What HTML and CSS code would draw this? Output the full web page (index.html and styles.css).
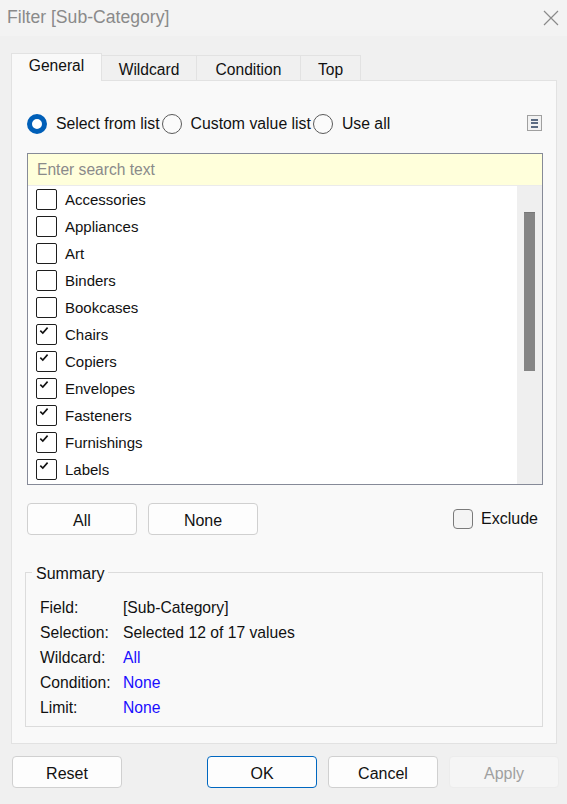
FILE: index.html
```html
<!DOCTYPE html>
<html>
<head>
<meta charset="utf-8">
<link rel="stylesheet" href="styles.css">
</head>
<body>
<div class="dialog">
  <div class="titlebar">
    <span class="title">Filter [Sub-Category]</span>
    <svg class="close" width="16" height="16" viewBox="0 0 16 16"><path d="M1 1 L15 15 M15 1 L1 15" stroke="#8a8a8a" stroke-width="1.2" fill="none"/></svg>
  </div>
  <div class="tabs">
    <div class="tab active">General</div>
    <div class="tab t-wild">Wildcard</div>
    <div class="tab t-cond">Condition</div>
    <div class="tab t-top">Top</div>
  </div>
  <div class="panel">
    <div class="radios">
      <div class="radio-item"><span class="radio on"></span><span>Select from list</span></div>
      <div class="radio-item"><span class="radio"></span><span>Custom value list</span></div>
      <div class="radio-item"><span class="radio"></span><span>Use all</span></div>
      <div class="spacer"></div>
      <span class="menu-icon"><span></span><span></span><span></span></span>
    </div>
    <div class="listbox">
      <div class="search">Enter search text</div>
      <div class="list-body">
        <div class="items">
          <div class="item"><span class="cb"></span>Accessories</div>
          <div class="item"><span class="cb"></span>Appliances</div>
          <div class="item"><span class="cb"></span>Art</div>
          <div class="item"><span class="cb"></span>Binders</div>
          <div class="item"><span class="cb"></span>Bookcases</div>
          <div class="item"><span class="cb"><svg width="19" height="19" viewBox="0 0 19 19"><path d="M3.3 5.6 L5.8 8 L10.6 2.6" stroke="#111" stroke-width="1.6" fill="none"/></svg></span>Chairs</div>
          <div class="item"><span class="cb"><svg width="19" height="19" viewBox="0 0 19 19"><path d="M3.3 5.6 L5.8 8 L10.6 2.6" stroke="#111" stroke-width="1.6" fill="none"/></svg></span>Copiers</div>
          <div class="item"><span class="cb"><svg width="19" height="19" viewBox="0 0 19 19"><path d="M3.3 5.6 L5.8 8 L10.6 2.6" stroke="#111" stroke-width="1.6" fill="none"/></svg></span>Envelopes</div>
          <div class="item"><span class="cb"><svg width="19" height="19" viewBox="0 0 19 19"><path d="M3.3 5.6 L5.8 8 L10.6 2.6" stroke="#111" stroke-width="1.6" fill="none"/></svg></span>Fasteners</div>
          <div class="item"><span class="cb"><svg width="19" height="19" viewBox="0 0 19 19"><path d="M3.3 5.6 L5.8 8 L10.6 2.6" stroke="#111" stroke-width="1.6" fill="none"/></svg></span>Furnishings</div>
          <div class="item"><span class="cb"><svg width="19" height="19" viewBox="0 0 19 19"><path d="M3.3 5.6 L5.8 8 L10.6 2.6" stroke="#111" stroke-width="1.6" fill="none"/></svg></span>Labels</div>
        </div>
        <div class="scrollbar"><div class="thumb"></div></div>
      </div>
    </div>
    <div class="btnrow">
      <button class="btn">All</button>
      <button class="btn">None</button>
      <div class="spacer"></div>
      <label class="exclude"><span class="cb2"></span>Exclude</label>
    </div>
    <div class="summary">
      <span class="legend">Summary</span>
      <div class="srow"><span class="lbl">Field:</span><span>[Sub-Category]</span></div>
      <div class="srow"><span class="lbl">Selection:</span><span>Selected 12 of 17 values</span></div>
      <div class="srow"><span class="lbl">Wildcard:</span><span class="link">All</span></div>
      <div class="srow"><span class="lbl">Condition:</span><span class="link">None</span></div>
      <div class="srow"><span class="lbl">Limit:</span><span class="link">None</span></div>
    </div>
  </div>
  <div class="footer">
    <button class="btn fbtn">Reset</button>
    <div class="spacer"></div>
    <button class="btn fbtn ok">OK</button>
    <button class="btn fbtn">Cancel</button>
    <button class="btn fbtn disabled">Apply</button>
  </div>
</div>
</body>
</html>
```

FILE: styles.css
```css
* { box-sizing: border-box; }
html, body {
  margin: 0;
  padding: 0;
  background: #f0f0f0;
}
body {
  font-family: "Liberation Sans", Arial, sans-serif;
  font-size: 15.5px;
  color: #111;
}
.dialog {
  width: 567px;
  height: 804px;
  display: flex;
  flex-direction: column;
}
.titlebar {
  height: 36px;
  background: #f3f3f3;
  display: flex;
  align-items: center;
  justify-content: space-between;
  padding: 0 8px 1px 7px;
}
.title {
  color: #8a8a8a;
  font-size: 17.6px;
}
.close { display: block; }
.tabs {
  margin-top: 17px;
  padding-left: 11px;
  display: flex;
  align-items: flex-end;
  height: 27px;
  position: relative;
  z-index: 1;
}
.tab {
  height: 25px;
  border: 1px solid #e2e2e2;
  border-bottom: none;
  border-left: none;
  background: #f0f0f0;
  display: flex;
  align-items: center;
  justify-content: center;
  font-size: 15.6px;
  padding-top: 3px;
}
.tab.active {
  height: 28px;
  margin-bottom: -1px;
  width: 91px;
  border-left: 1px solid #e2e2e2;
  background: #f9f9f9;
  padding-top: 0;
  padding-bottom: 3px;
}
.t-wild { width: 95px; }
.t-cond { width: 104px; }
.t-top { width: 60px; }
.panel {
  margin-left: 11px;
  width: 546px;
  height: 664px;
  border: 1px solid #e2e2e2;
  background: #f9f9f9;
  padding: 0 0 0 14px;
  display: flex;
  flex-direction: column;
}
.radios {
  margin-top: 33px;
  height: 20px;
  display: flex;
  align-items: center;
  padding-right: 14px;
}
.radio-item {
  display: flex;
  align-items: center;
  font-size: 15.8px;
}
.radio {
  width: 20px;
  height: 20px;
  border-radius: 50%;
  border: 1px solid #5a5a5a;
  background: #fbfbfb;
  margin-right: 9px;
}
.radio.on {
  border: 5.5px solid #005fb8;
  background: #fff;
  margin-left: 1px;
  margin-right: 9px;
}
.radio-item + .radio-item .radio { margin-left: 2px; }
.spacer { flex: 1; }
.menu-icon {
  width: 15px;
  height: 16px;
  border: 1px solid #a0a0a0;
  background: #f2f2f2;
  display: flex;
  flex-direction: column;
  justify-content: center;
  align-items: center;
  gap: 1.5px;
  margin-top: -2px;
}
.menu-icon span {
  width: 7px;
  height: 2px;
  background: #5b6b82;
}
.listbox {
  margin-top: 19px;
  margin-left: 1px;
  width: 516px;
  height: 332px;
  border: 1px solid #868a98;
  background: #fff;
  display: flex;
  flex-direction: column;
  overflow: hidden;
}
.search {
  height: 32px;
  background: #ffffdb;
  border-bottom: 1px solid #ebebeb;
  color: #8a8a8a;
  font-size: 15.6px;
  display: flex;
  align-items: center;
  padding-left: 9px;
  padding-top: 1px;
}
.list-body {
  flex: 1;
  display: flex;
  overflow: hidden;
}
.items {
  flex: 1;
}
.item {
  height: 27px;
  display: flex;
  align-items: center;
  padding-left: 8px;
  font-size: 15px;
}
.cb {
  width: 21px;
  height: 21px;
  border: 1px solid #1e1e1e;
  border-radius: 2px;
  margin-right: 8px;
  display: block;
  flex: none;
}
.cb svg { display: block; }
.scrollbar {
  width: 25px;
  background: #efefef;
  padding: 26px 0 0 7px;
}
.thumb {
  width: 11px;
  height: 159px;
  background: #858585;
  border-top: 1px solid #777;
}
.btnrow {
  margin-top: 18px;
  height: 32px;
  display: flex;
  align-items: center;
  padding-right: 18px;
  gap: 11px;
}
.btn {
  width: 110px;
  height: 32px;
  border: 1px solid #d0d0d0;
  border-radius: 4px;
  background: #fdfdfd;
  font-family: inherit;
  font-size: 16px;
  color: #111;
  padding: 3px 0 0;
}
.btnrow .btn:first-child { margin-left: 1px; }
.exclude {
  display: flex;
  align-items: center;
  font-size: 16px;
}
.cb2 {
  width: 20px;
  height: 20px;
  border: 1px solid #7a7a7a;
  border-radius: 4px;
  background: #f4f4f4;
  margin-right: 8px;
}
.summary {
  margin-top: 37px;
  margin-left: -1px;
  width: 518px;
  height: 155px;
  border: 1px solid #dcdcdc;
  position: relative;
  padding: 22px 0 0 14px;
}
.legend {
  position: absolute;
  left: 6px;
  top: -9px;
  background: #f9f9f9;
  padding: 0 4px;
  font-size: 16px;
  line-height: 20px;
}
.srow {
  height: 25px;
  display: flex;
  align-items: center;
  font-size: 15.7px;
}
.lbl { width: 83px; }
.link { color: #1a0dff; }
.footer {
  margin-top: 12px;
  height: 32px;
  display: flex;
  padding: 0 8px 0 12px;
  gap: 11px;
}
.fbtn { width: 110px; height: 32px; padding-top: 3px; }
.ok { border-color: #0067c0; }
.disabled {
  background: #f5f5f5;
  border-color: #ececec;
  color: #a0a0a0;
}
```
